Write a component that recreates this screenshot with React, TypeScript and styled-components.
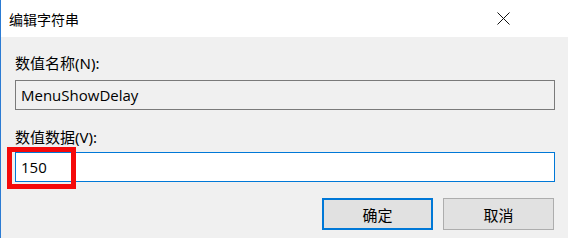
import React from 'react';
import styled, { createGlobalStyle } from 'styled-components';

const GlobalStyle = createGlobalStyle`
  html, body {
    margin: 0;
    padding: 0;
    background: #f0f0f0;
  }
  * {
    box-sizing: border-box;
  }
`;

const Window = styled.div`
  width: 568px;
  height: 238px;
  display: flex;
  flex-direction: column;
  border-left: 1px solid #2b7bd3;
  background: #f0f0f0;
  font-family: "Noto Sans", "Noto Sans CJK SC", sans-serif;
  color: #000;
  overflow: hidden;
`;

const TitleBar = styled.div`
  height: 37px;
  flex-shrink: 0;
  display: flex;
  align-items: center;
  justify-content: space-between;
  padding: 0 58px 0 8px;
  background: #fff;
`;

const Title = styled.span`
  font-family: "Noto Sans CJK SC", sans-serif;
  font-size: 14px;
  line-height: 20px;
`;

const CloseIcon = styled.svg`
  width: 13px;
  height: 13px;
  display: block;
`;

const Body = styled.div`
  flex: 1;
  display: flex;
  flex-direction: column;
  padding: 16px 13px 0 14px;
`;

const Label = styled.div<{ $gap: number }>`
  font-family: "Noto Sans", "Noto Sans CJK SC", sans-serif;
  font-size: 15px;
  line-height: 20px;
  margin-top: ${p => p.$gap}px;
  margin-bottom: ${p => (p.$gap ? 5 : 7)}px;
`;

const FieldWrap = styled.div`
  position: relative;
`;

const Field = styled.div<{ $active?: boolean }>`
  height: 30px;
  display: flex;
  align-items: center;
  padding: 0 5px;
  font-size: 15px;
  font-family: "Open Sans", "Noto Sans", sans-serif;
  border: 1px solid ${p => (p.$active ? '#0078d7' : '#7a7a7a')};
  background: ${p => (p.$active ? '#fff' : '#f0f0f0')};
`;

const Highlight = styled.div`
  position: absolute;
  left: -8px;
  top: -5px;
  width: 69px;
  height: 42px;
  border: 5px solid #f50a0a;
  pointer-events: none;
`;

const ButtonRow = styled.div`
  display: flex;
  justify-content: flex-end;
  gap: 10px;
  margin-top: 16px;
  padding-right: 1px;
`;

const Button = styled.button<{ $primary?: boolean }>`
  width: 111px;
  height: 32px;
  padding: 0;
  font-family: "Noto Sans CJK SC", sans-serif;
  font-size: 15px;
  color: #000;
  background: #e1e1e1;
  border: ${p => (p.$primary ? '2px solid #0078d7' : '1px solid #adadad')};
  border-radius: 0;
`;

export default function App(): React.JSX.Element {
  return (
    <>
      <GlobalStyle />
      <Window>
        <TitleBar>
          <Title>编辑字符串</Title>
          <CloseIcon viewBox="0 0 13 13">
            <path d="M0.5 0.5 L12.5 12.5 M12.5 0.5 L0.5 12.5" stroke="#111" strokeWidth="1" fill="none" />
          </CloseIcon>
        </TitleBar>
        <Body>
          <Label $gap={0}>数值名称(N):</Label>
          <Field>MenuShowDelay</Field>
          <Label $gap={17}>数值数据(V):</Label>
          <FieldWrap>
            <Field $active>150</Field>
            <Highlight />
          </FieldWrap>
          <ButtonRow>
            <Button $primary>确定</Button>
            <Button>取消</Button>
          </ButtonRow>
        </Body>
      </Window>
    </>
  );
}
